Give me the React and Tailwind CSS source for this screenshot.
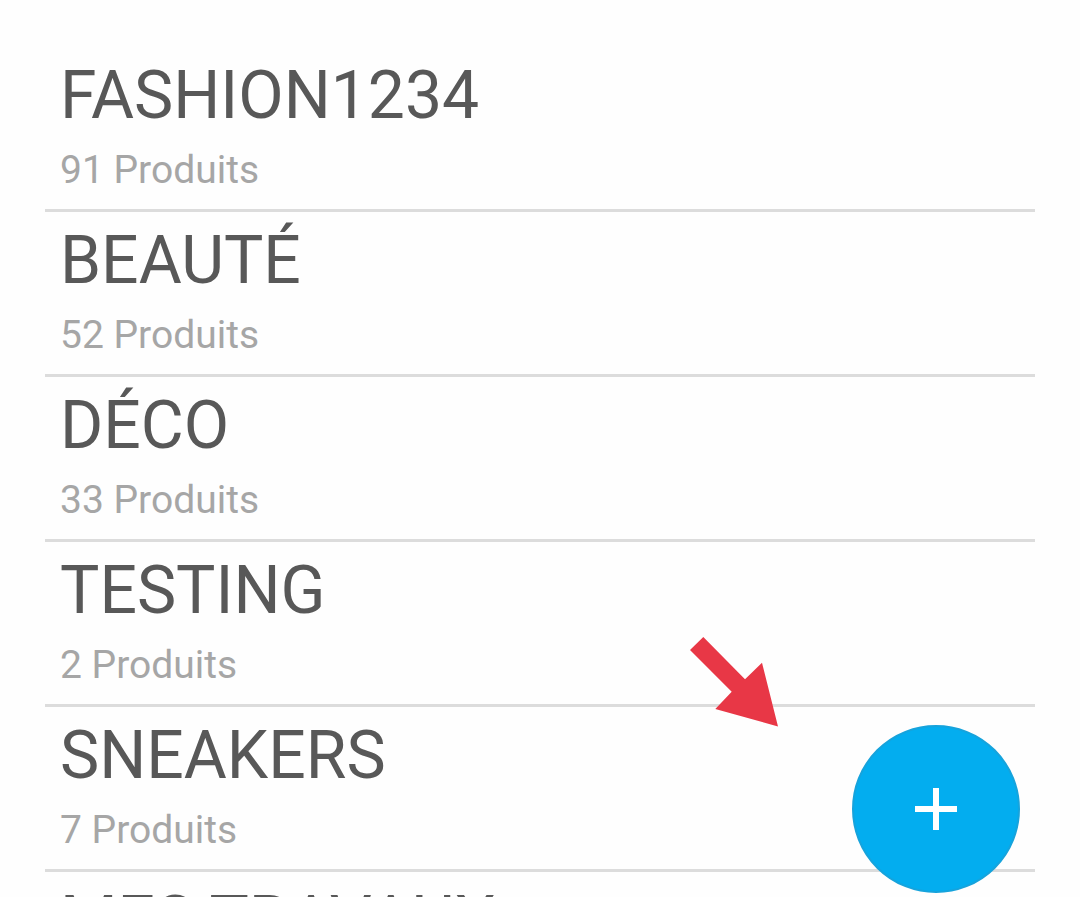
const categories = [
  { name: 'FASHION1234', count: 91 },
  { name: 'BEAUTÉ', count: 52 },
  { name: 'DÉCO', count: 33 },
  { name: 'TESTING', count: 2 },
  { name: 'SNEAKERS', count: 7 },
  { name: 'MES TRAVAUX', count: 4 },
];

function CategoryRow({ name, count }) {
  return (
    <li className="border-b-[3px] border-[#dcdcdc] px-[15px] pt-[9px] pb-[15px]">
      <h2 className="text-[66px] leading-[80px] text-[#585858]">{name}</h2>
      <p className="mt-[10px] text-[39px] leading-[48px] text-[#a6a6a6]">{count} Produits</p>
    </li>
  );
}

export default function App() {
  return (
    <div className="relative h-screen overflow-hidden bg-[#fefefe] font-['Roboto',sans-serif]">
      <main className="h-full overflow-y-auto px-[45px] pt-[47px] [scrollbar-width:none]">
        <ul>
          {categories.map((category) => (
            <CategoryRow key={category.name} {...category} />
          ))}
        </ul>
      </main>

      <svg
        className="pointer-events-none absolute right-[302px] bottom-[170px] h-[90px] w-[88px]"
        viewBox="0 0 88 90"
        aria-hidden="true"
      >
        <path d="M13.3 0 L55 42.3 L72 25.7 L88 89.5 L25.3 72 L41.7 54.7 L0 13 Z" fill="#e83746" />
      </svg>

      <button
        type="button"
        aria-label="Ajouter"
        className="absolute right-[60px] bottom-1 flex size-[168px] items-center justify-center rounded-full border-2 border-[#16a3dc] bg-[#03adef]"
      >
        <svg className="size-[42px]" viewBox="0 0 42 42" aria-hidden="true">
          <path d="M18 0h6v18h18v6H24v18h-6V24H0v-6h18z" fill="#fff" />
        </svg>
      </button>
    </div>
  );
}
